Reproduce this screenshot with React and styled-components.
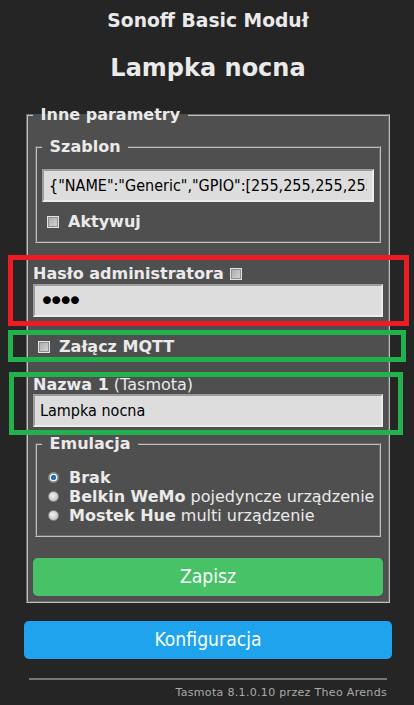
import React from "react";
import styled, { createGlobalStyle } from "styled-components";

const controlFont = `"DejaVu Sans Condensed", Tahoma, "Liberation Sans", sans-serif`;

const GlobalStyle = createGlobalStyle`
  html, body {
    margin: 0;
    padding: 0;
    background: #252525;
  }
  body {
    font-family: "DejaVu Sans", Verdana, sans-serif;
    font-size: 16px;
    color: #eaeaea;
  }
`;

const Page = styled.div`
  width: 368px;
  margin-left: 24px;
  padding-bottom: 8px;
`;

const Header = styled.header`
  text-align: center;
`;

const ModuleTitle = styled.h3`
  margin: 10px 0 0;
  font-size: 18.72px;
  line-height: 22px;
  font-weight: bold;
`;

const DeviceTitle = styled.h2`
  margin: 22px 0 0;
  font-size: 24px;
  line-height: 28px;
  font-weight: bold;
`;

const Fieldset = styled.fieldset`
  margin: ${(p) => p.$top || 0}px 2px 0;
  padding: 5px;
  border: 2px groove #c0c0c0;
  background: #4f4f4f;
  min-width: 0;
`;

const Legend = styled.legend`
  padding: 0 2px;
  font-size: 16px;
  line-height: 20px;
  font-weight: bold;
`;

const Row = styled.div`
  line-height: 19px;
  margin-top: ${(p) => p.$top || 0}px;
  margin-bottom: ${(p) => p.$bottom || 0}px;
  white-space: nowrap;
  b {
    font-weight: bold;
  }
`;

const TextInput = styled.input`
  display: block;
  width: 100%;
  height: 33px;
  box-sizing: border-box;
  margin: ${(p) => p.$top || 0}px 0 0;
  padding: 5px;
  border: 2px solid;
  border-color: #9c9c9c #ececec #ececec #9c9c9c;
  background: #dddddd;
  color: #000000;
  font-family: ${controlFont};
  font-size: 16px;
  outline: none;
  &[type="password"] {
    padding: 0 5px 0 4px;
    font-family: "DejaVu Sans", sans-serif;
    font-size: 27px;
    letter-spacing: -6.6px;
  }
`;

const Check = styled.input.attrs({ type: "checkbox" })`
  appearance: none;
  width: 12px;
  height: 12px;
  box-sizing: border-box;
  margin: 0 ${(p) => p.$right ?? 9}px 0 ${(p) => p.$left ?? 5}px;
  vertical-align: -1px;
  border: 1px solid #e4e4e4;
  background: linear-gradient(135deg, #a9a9a9, #d6d6d6);
  box-shadow: inset 0 0 0 1px #8e8e8e;
`;

const Radio = styled.input.attrs({ type: "radio" })`
  appearance: none;
  width: 11px;
  height: 11px;
  box-sizing: border-box;
  margin: 0 10px 0 6px;
  vertical-align: 0;
  border-radius: 50%;
  border: 1px solid #8c8c8c;
  background: radial-gradient(circle at 40% 40%, #f2f2f2, #b4b4b4);
  &:checked {
    background: radial-gradient(circle, #1f6fb2 0 2px, #3d8fd0 2.5px, #f4f4f4 3px 3.5px, #9a9a9a 4px);
  }
`;

const Button = styled.button`
  display: block;
  width: 100%;
  margin-top: ${(p) => p.$top || 0}px;
  padding: 0;
  border: 0;
  border-radius: 0.3rem;
  background: ${(p) => (p.$green ? "#47c266" : "#1fa3ec")};
  color: #faffff;
  font-family: ${controlFont};
  font-size: 19.2px;
  line-height: 38px;
  cursor: pointer;
`;

const Marked = styled.div`
  position: relative;
  margin-top: ${(p) => p.$top || 0}px;
  &::after {
    content: "";
    position: absolute;
    top: ${(p) => p.$box[0]}px;
    right: ${(p) => p.$box[1]}px;
    bottom: ${(p) => p.$box[2]}px;
    left: ${(p) => p.$box[3]}px;
    border: 5px solid ${(p) => p.$color};
    pointer-events: none;
  }
`;

const Footer = styled.footer`
  padding: 0 5px;
  text-align: right;
  font-size: 11px;
  line-height: 13px;
`;

const Rule = styled.hr`
  margin: 19px 0 6px;
  height: 0;
  border: 0;
  border-top: 2px solid #777777;
`;

const FooterLink = styled.a`
  color: #aaaaaa;
  text-decoration: none;
  letter-spacing: 0.32px;
`;

const template =
  '{"NAME":"Generic","GPIO":[255,255,255,255,255,255,255,255,255,255,255,255,255],"FLAG":1,"BASE":18}';

const emulations = [
  { id: "r0", name: "Brak", note: "", checked: true },
  { id: "r1", name: "Belkin WeMo", note: " pojedyncze urządzenie" },
  { id: "r2", name: "Mostek Hue", note: " multi urządzenie" },
];

export default function App() {
  return (
    <Page>
      <GlobalStyle />
      <Header>
        <ModuleTitle>Sonoff Basic Moduł</ModuleTitle>
        <DeviceTitle>Lampka nocna</DeviceTitle>
      </Header>

      <Fieldset $top={23}>
        <Legend>{"\u00a0Inne parametry\u00a0"}</Legend>

        <Fieldset $top={7}>
          <Legend>{"\u00a0Szablon\u00a0"}</Legend>
          <TextInput $top={7} defaultValue={template} placeholder="Szablon" />
          <Row $top={10} $bottom={5}>
            <Check />
            <b>Aktywuj</b>
          </Row>
        </Fieldset>

        <Marked $top={21} $color="#ed1c24" $box={[-9, -26, -9, -25]}>
          <Row>
            <b>Hasło administratora</b>
            <Check $left={6} $right={0} />
          </Row>
          <TextInput $top={1} type="password" defaultValue="****" />
        </Marked>

        <Marked $top={20} $color="#22b14c" $box={[-7, -23, -6, -25]}>
          <Row>
            <Check />
            <b>Załącz MQTT</b>
          </Row>
        </Marked>

        <Marked $top={19} $color="#22b14c" $box={[-3, -20, -8, -24]}>
          <Row>
            <b>Nazwa 1</b> (Tasmota)
          </Row>
          <TextInput defaultValue="Lampka nocna" />
        </Marked>

        <Fieldset $top={7}>
          <Legend>{"\u00a0Emulacja\u00a0"}</Legend>
          {emulations.map((item, i) => (
            <Row
              key={item.id}
              $top={i === 0 ? 9 : 0}
              $bottom={i === emulations.length - 1 ? 5 : 0}
            >
              <Radio name="b2" defaultChecked={item.checked} />
              <b>{item.name}</b>
              {item.note}
            </Row>
          ))}
        </Fieldset>

        <Button $top={21} $green>
          Zapisz
        </Button>
      </Fieldset>

      <Button $top={18}>Konfiguracja</Button>

      <Footer>
        <Rule />
        <FooterLink href="#">Tasmota 8.1.0.10 przez Theo Arends</FooterLink>
      </Footer>
    </Page>
  );
}
